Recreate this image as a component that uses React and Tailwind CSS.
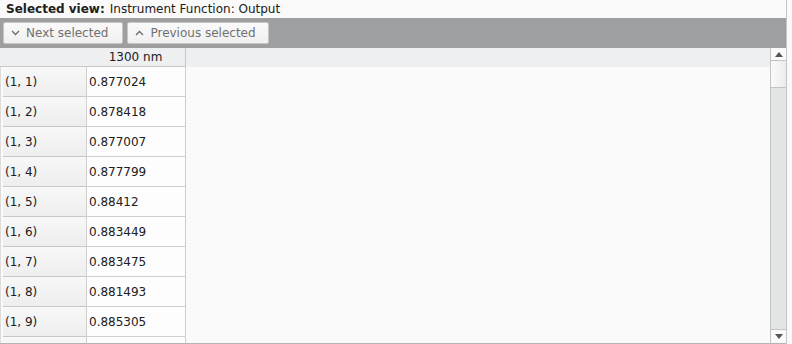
import React from "react";

const ROWS = [
  ["(1, 1)", "0.877024"],
  ["(1, 2)", "0.878418"],
  ["(1, 3)", "0.877007"],
  ["(1, 4)", "0.877799"],
  ["(1, 5)", "0.88412"],
  ["(1, 6)", "0.883449"],
  ["(1, 7)", "0.883475"],
  ["(1, 8)", "0.881493"],
  ["(1, 9)", "0.885305"],
  ["", ""],
];

const font = { fontFamily: '"DejaVu Sans", sans-serif' };

function ToolButton({ up, label, pr }) {
  return (
    <button className={`h-[22px] flex items-center gap-[6px] pl-[7px] ${pr} bg-gradient-to-b from-[#fafafa] to-[#f0f0f0] border border-[#c6c6c6] rounded-[2px] text-[12px] text-[#707070]`}>
      <svg width="9" height="6" viewBox="0 0 9 6" className="text-[#6a6a6a]">
        <path d={up ? "M1 5 L4.5 1.5 L8 5" : "M1 1 L4.5 4.5 L8 1"} fill="none" stroke="currentColor" strokeWidth="1.3" />
      </svg>
      {label}
    </button>
  );
}

export default function App() {
  return (
    <div className="w-[792px] h-[344px] bg-[#fafafa] text-[#202020] overflow-hidden" style={font}>
      <div className="w-[787px] h-[344px] border-r border-[#c4c4c4] flex flex-col">
        {/* ── title ── */}
        <div className="h-[18px] pl-[6px] flex items-center text-[12px] leading-none">
          <span className="font-bold">Selected view:</span>
          <span className="ml-[5px]">Instrument Function: Output</span>
        </div>

        {/* ── toolbar ── */}
        <div className="h-[30px] bg-[#9e9fa0] flex items-center gap-[4px] pl-[3px]">
          <ToolButton label="Next selected" pr="pr-[14px]" />
          <ToolButton up label="Previous selected" pr="pr-[12px]" />
        </div>

        {/* ── table + scrollbar ── */}
        <div className="flex-1 flex border-b border-[#b4b4b4] min-h-0">
          <div className="flex-1 min-w-0 overflow-hidden">
            <div className="h-[19px] bg-[#eeeff0] flex">
              <div className="w-[186px] h-full flex border-b border-[#c8c8c8] text-[12px]">
                <div className="w-[86px]" />
                <div className="w-[100px] border-r border-[#c8c8c8] flex items-center justify-center">1300 nm</div>
              </div>
            </div>
            {ROWS.map(([k, v], i) => (
              <div key={i} className="h-[30px] flex text-[12px]">
                <div className="w-[3px] border-l border-[#dcdcdc]" />
                <div className="w-[83px] bg-gradient-to-b from-[#f8f8f8] to-[#eeeeee] border-b border-[#c8c8c8] flex items-center pl-[2px]">
                  {k}
                </div>
                <div className="w-[100px] bg-[#fdfdfd] border-l border-r border-b border-[#cfcfcf] flex items-center pl-[2px]">
                  {v}
                </div>
              </div>
            ))}
          </div>

          {/* ── scrollbar ── */}
          <div className="w-[16px] flex flex-col border-l border-[#c4c4c4] bg-[#e4e5e5]">
            <div className="h-[13px] bg-[#fafafa] border-b border-[#c4c4c4] flex items-center justify-center">
              <svg width="8" height="5" viewBox="0 0 8 5"><path d="M0 5 L4 0 L8 5 Z" fill="#555" /></svg>
            </div>
            <div className="h-[27px] bg-gradient-to-r from-[#fafafa] to-[#ececec] border-b border-[#c4c4c4]" />
            <div className="flex-1" />
            <div className="h-[14px] bg-[#fafafa] border-t border-[#c4c4c4] flex items-center justify-center">
              <svg width="8" height="5" viewBox="0 0 8 5"><path d="M0 0 L4 5 L8 0 Z" fill="#555" /></svg>
            </div>
          </div>
        </div>
      </div>
    </div>
  );
}
